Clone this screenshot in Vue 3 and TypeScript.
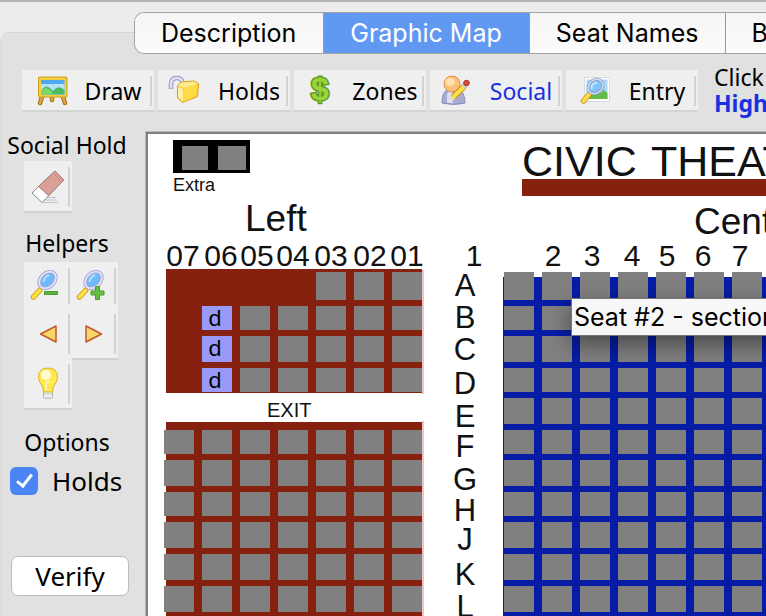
<script setup lang="ts">
import { ref } from 'vue'

interface Tool { id: string; label: string }
interface MapLabel { text: string; x: number; y: number; size: number; anchor?: 'start' | 'middle' }
interface Row { name: string; y: number; h: number; base: number }
interface Seat { x: number; y: number; w: number; h: number }

const tabs = ['Description', 'Graphic Map', 'Seat Names', 'B']
const activeTab = ref('Graphic Map')

const tools: Tool[] = [
  { id: 'draw', label: 'Draw' },
  { id: 'holds', label: 'Holds' },
  { id: 'zones', label: 'Zones' },
  { id: 'social', label: 'Social' },
  { id: 'entry', label: 'Entry' },
]
const activeTool = ref('social')
const showHolds = ref(true)

const rows: Row[] = [
  { name: 'A', y: 138, h: 28, base: 162 },
  { name: 'B', y: 172, h: 24, base: 194 },
  { name: 'C', y: 202, h: 26, base: 226 },
  { name: 'D', y: 234, h: 24, base: 260 },
  { name: 'E', y: 264, h: 26, base: 293 },
  { name: 'F', y: 296, h: 24, base: 323 },
  { name: 'G', y: 326, h: 26, base: 356 },
  { name: 'H', y: 358, h: 24, base: 387 },
  { name: 'J', y: 388, h: 26, base: 416 },
  { name: 'K', y: 420, h: 26, base: 451 },
  { name: 'L', y: 452, h: 26, base: 483 },
]

const seatWidth = 30
const seatPitch = 38
const leftStart = 16
const centerStart = 356

const leftSeats: Seat[] = []
const heldSeats: Seat[] = []
const centerSeats: Seat[] = []

for (const row of rows) {
  for (let col = 0; col < 8; col++) {
    centerSeats.push({ x: centerStart + col * seatPitch, y: row.y, w: seatWidth, h: row.h })
  }
  if (row.name === 'E') continue
  const first = row.name === 'A' ? 4 : 'BCD'.includes(row.name) ? 1 : 0
  for (let col = first; col < 7; col++) {
    const seat = { x: leftStart + col * seatPitch, y: row.y, w: seatWidth, h: row.h }
    if (first === 1 && col === 1) heldSeats.push(seat)
    else leftSeats.push(seat)
  }
}

const labels: MapLabel[] = [
  { text: 'Extra', x: 25, y: 57, size: 18 },
  { text: 'Left', x: 97, y: 97, size: 37 },
  { text: 'EXIT', x: 119, y: 283, size: 20 },
  { text: 'CIVIC', x: 374, y: 42, size: 43 },
  { text: 'THEATRE', x: 503, y: 42, size: 43 },
  { text: 'Center', x: 546, y: 100, size: 37 },
  ...['07', '06', '05', '04', '03', '02', '01'].map((text, i) => ({
    text, x: [35, 73, 109, 145, 183, 222, 259][i], y: 132, size: 30, anchor: 'middle' as const,
  })),
  ...['1', '2', '3', '4', '5', '6', '7'].map((text, i) => ({
    text, x: [326, 405, 444, 484, 519, 555, 592][i], y: 132, size: 30, anchor: 'middle' as const,
  })),
  ...rows.map((row) => ({ text: row.name, x: 317, y: row.base, size: 31, anchor: 'middle' as const })),
]
</script>

<template>
  <div class="window">
    <nav class="tabs">
      <button
        v-for="tab in tabs"
        :key="tab"
        type="button"
        class="tab"
        :class="{ active: tab === activeTab }"
        @click="activeTab = tab"
      >{{ tab }}</button>
    </nav>

    <main class="panel">
      <div class="toolbar">
        <button
          v-for="tool in tools"
          :key="tool.id"
          type="button"
          class="tool"
          :class="{ active: tool.id === activeTool }"
          @click="activeTool = tool.id"
        >
          <svg class="tool-icon" viewBox="0 0 36 32" aria-hidden="true">
            <g v-if="tool.id === 'draw'">
              <path d="M10 23 L8 29 M31 23 L33 29 M20 23 V26" stroke="#a8701c" stroke-width="4.500" stroke-linecap="round" />
              <path d="M10 23 L8 29 M31 23 L33 29 M20 23 V26" stroke="#e0a040" stroke-width="2.500" stroke-linecap="round" />
              <rect x="6.500" y="3" width="28.500" height="20" rx="1" fill="#f4cf3c" stroke="#c9a01e" />
              <rect x="9" y="6" width="23.500" height="14.500" fill="#4fa9ee" />
              <rect x="9" y="10" width="23.500" height="10.500" fill="#b8e2fb" />
              <path d="M9 17 Q14 9 19 15 L21 17 Q27 10 32.500 16 V20.500 H9Z" fill="#4dbb62" />
              <path d="M9 18 Q14 11 19 17 L21 20.500 H9Z" fill="#7fd66a" />
            </g>
            <g v-else-if="tool.id === 'holds'">
              <path d="M3 15 V10 Q3 4 9 4 Q14.500 4 14.500 10 V13" fill="none" stroke="#9396c4" stroke-width="4.500" />
              <path d="M3 14.500 V10 Q3 4 9 4 Q14.500 4 14.500 10 V13" fill="none" stroke="#dfe1f6" stroke-width="2.500" />
              <path d="M9.500 12 L13 8 L26 7 L30.500 9.500 L29.500 22.500 L14.500 28.500 L9.500 24Z" fill="#f8cf35" stroke="#d99b19" />
              <path d="M10 12 L13 8.500 L26 7.500 L30 10 L16 14Z" fill="#ffe98a" />
              <path d="M15.500 14.500 L29.500 10.500 L29 22 L15 28Z" fill="#fddb46" />
              <path d="M10 13 L15 15 V27.500 L10 23.500Z" fill="#fff0a0" />
            </g>
            <text
              v-else-if="tool.id === 'zones'"
              class="dollar"
              x="16"
              y="26"
              text-anchor="middle"
            >$</text>
            <g v-else-if="tool.id === 'social'">
              <path d="M2 29 Q2 17 8 16 H18 Q25 17 25 29 Q14 32 2 29Z" fill="#a9abd3" stroke="#8a8cba" />
              <path d="M7 20 Q8 17 12 17 L13 29 H7Z" fill="#dcddf2" />
              <circle cx="12" cy="10" r="8" fill="#fcbf74" stroke="#dd9147" />
              <ellipse cx="10" cy="8" rx="5" ry="4" fill="#ffe0b0" />
              <path d="M13 23.500 L25.500 11" stroke="#b88a18" stroke-width="6" />
              <path d="M13 23.500 L25.500 11" stroke="#ffe14b" stroke-width="4" />
              <path d="M10.500 26.500 L11.500 21.500 L15.500 25.500Z" fill="#f4d9a0" />
              <path d="M23.500 13 L25 11.500" stroke="#c8cbe0" stroke-width="5.500" />
              <circle cx="26.500" cy="9" r="2.800" fill="#d8483c" stroke="#a8362c" />
            </g>
            <g v-else>
              <rect x="8.500" y="3.500" width="25" height="24" fill="#fff" stroke="#d6dbe0" />
              <rect x="10.500" y="5.500" width="21" height="19.500" fill="#a7d8f8" />
              <path d="M10.500 20 Q19 12 25 19 L28 16 L31.500 19 V25 H10.500Z" fill="#62bd45" />
              <path d="M7.500 27 L13 20.500" stroke="#c79316" stroke-width="5.500" stroke-linecap="round" />
              <path d="M7.500 27 L13 20.500" stroke="#ffdc45" stroke-width="4" stroke-linecap="round" />
              <ellipse cx="19.500" cy="12.500" rx="8" ry="6.500" transform="rotate(-40 19.500 12.500)" fill="#7fc4f8" stroke="#8f98c6" stroke-width="3" />
              <ellipse cx="19.500" cy="12.500" rx="8" ry="6.500" transform="rotate(-40 19.500 12.500)" fill="none" stroke="#d5dcf4" stroke-width="1.500" />
              <path d="M15.500 15 Q15 9 21 9" fill="none" stroke="#c4e6fd" stroke-width="2" />
            </g>
          </svg>
          <span class="tool-label">{{ tool.label }}</span>
        </button>
        <p class="hint">Click<br><strong>High</strong></p>
      </div>

      <div class="workspace">
        <aside class="sidebar">
          <h2 class="heading">Social Hold</h2>
          <div class="icon-grid">
            <button type="button" class="icon-button last" aria-label="Erase">
              <svg viewBox="0 0 48 50" aria-hidden="true">
                <path d="M23 36.500 H32 M21 39 H33 M19 41.500 H34" stroke="#c2c2c6" />
                <path d="M31 10 L40 19 L18 41.500 L8 32Z" fill="#fff" stroke="#87878b" stroke-linejoin="round" />
                <path d="M31 10 L40 19 L24.500 34.500 L14.500 25.500Z" fill="#dc9f98" stroke="#a07c78" />
                <path d="M30 13 L37 20" stroke="#c6837c" />
              </svg>
            </button>
          </div>

          <h2 class="heading helpers">Helpers</h2>
          <div class="icon-grid">
            <button type="button" class="icon-button short" aria-label="Zoom out">
              <svg viewBox="0 0 48 46" aria-hidden="true">
                <path d="M9.500 35 L15.500 28.500" stroke="#c9981a" stroke-width="5.500" stroke-linecap="round" />
                <path d="M9.500 35 L15.500 28.500" stroke="#ffdf3f" stroke-width="4" stroke-linecap="round" />
                <ellipse cx="23.500" cy="18" rx="9.500" ry="7" transform="rotate(-45 23.500 18)" fill="#6ebafa" stroke="#9a9dca" stroke-width="3.500" />
                <ellipse cx="23.500" cy="18" rx="9.500" ry="7" transform="rotate(-45 23.500 18)" fill="none" stroke="#dfe0f5" stroke-width="2" />
                <path d="M19.500 20 Q20 15 25 13" fill="none" stroke="#a8d8fd" stroke-width="2.500" />
                <rect x="20.500" y="29.500" width="13" height="3" fill="#5cb338" stroke="#4c9c32" />
              </svg>
            </button>
            <button type="button" class="icon-button short" aria-label="Zoom in">
              <svg viewBox="2 0 48 46" aria-hidden="true">
                <path d="M9.500 35 L15.500 28.500" stroke="#c9981a" stroke-width="5.500" stroke-linecap="round" />
                <path d="M9.500 35 L15.500 28.500" stroke="#ffdf3f" stroke-width="4" stroke-linecap="round" />
                <ellipse cx="23.500" cy="18" rx="9.500" ry="7" transform="rotate(-45 23.500 18)" fill="#6ebafa" stroke="#9a9dca" stroke-width="3.500" />
                <ellipse cx="23.500" cy="18" rx="9.500" ry="7" transform="rotate(-45 23.500 18)" fill="none" stroke="#dfe0f5" stroke-width="2" />
                <path d="M19.500 20 Q20 15 25 13" fill="none" stroke="#a8d8fd" stroke-width="2.500" />
                <path d="M25.500 24.500 H29.500 V29 H34 V33 H29.500 V37.500 H25.500 V33 H21 V29 H25.500Z" fill="#66bf42" stroke="#4c9c32" />
              </svg>
            </button>
            <button type="button" class="icon-button" aria-label="Previous">
              <svg viewBox="0 0 48 50" aria-hidden="true">
                <path d="M16.500 26 L32 18 V34Z" fill="#f7d768" stroke="#c4562f" stroke-width="1.500" stroke-linejoin="round" />
              </svg>
            </button>
            <button type="button" class="icon-button last" aria-label="Next">
              <svg viewBox="0 0 48 50" aria-hidden="true">
                <path d="M29.500 26 L14 18 V34Z" fill="#f7d768" stroke="#c4562f" stroke-width="1.500" stroke-linejoin="round" />
              </svg>
            </button>
            <button type="button" class="icon-button last" aria-label="Hint">
              <svg viewBox="0 0 48 50" aria-hidden="true">
                <rect x="19.500" y="33" width="9" height="7" rx="1.500" fill="#f2f2f2" stroke="#b4b4b8" />
                <path d="M20 36 H28" stroke="#c8c8cc" />
                <path d="M19.500 34 Q19.500 29 17 26 Q14.500 23 14.500 19.500 Q14.500 10 24 10 Q33.500 10 33.500 19.500 Q33.500 23 31 26 Q28.500 29 28.500 34Z" fill="#ffe950" stroke="#dcae2c" />
                <ellipse cx="22" cy="17" rx="5" ry="5" fill="#fffbd0" />
                <path d="M22 32 V25 L26 23" fill="none" stroke="#fff6a8" stroke-width="2" />
              </svg>
            </button>
          </div>

          <h2 class="heading options">Options</h2>
          <label class="check" for="holds">
            <input id="holds" v-model="showHolds" type="checkbox">
            <span>Holds</span>
          </label>
          <button type="button" class="verify">Verify</button>
        </aside>

        <section class="viewport" aria-label="Seating map">
          <div class="canvas">
            <svg class="map" width="760" height="520" role="img" aria-label="Civic Theatre seating map">
              <rect x="25" y="6" width="77" height="33" fill="#000" />
              <rect x="34" y="12" width="26" height="24" class="seat" />
              <rect x="70" y="12" width="28" height="24" class="seat" />
              <rect x="374" y="45" width="386" height="17" class="red" />
              <rect x="274" y="136" width="2" height="124" class="fringe" />
              <rect x="274" y="287" width="2" height="240" class="fringe" />
              <rect x="18" y="135" width="256" height="124" class="red" />
              <rect x="18" y="288" width="256" height="240" class="red" />
              <rect x="355" y="143" width="400" height="376" class="blue" />
              <rect
                v-for="(seat, i) in [...leftSeats, ...centerSeats]"
                :key="i"
                :x="seat.x"
                :y="seat.y"
                :width="seat.w"
                :height="seat.h"
                class="seat"
              />
              <g v-for="seat in heldSeats" :key="seat.y">
                <rect :x="seat.x" :y="seat.y" :width="seat.w" :height="seat.h" :class="showHolds ? 'held' : 'seat'" />
                <text v-if="showHolds" class="held-mark" text-anchor="middle" :x="seat.x + 13" :y="seat.y + 20">d</text>
              </g>
              <text
                v-for="(label, i) in labels"
                :key="'label' + i"
                :x="label.x"
                :y="label.y"
                :font-size="label.size"
                :text-anchor="label.anchor ?? 'start'"
                class="map-label"
              >{{ label.text }}</text>
            </svg>
            <div class="tooltip" role="tooltip">Seat #2 - section</div>
          </div>
        </section>
      </div>
    </main>
  </div>
</template>

<style>
body {
  background: #ececec;
  overflow: hidden;
}
</style>

<style scoped>
.window {
  height: 100vh;
  display: flex;
  flex-direction: column;
  overflow: hidden;
  box-sizing: border-box;
  border-top: 2px solid #b4b4b4;
  background: #ececec;
  color: #000;
  font-family: "Noto Sans", "Open Sans", sans-serif;
  font-size: 23px;
}

button {
  margin: 0;
  padding: 0;
  border: 0;
  color: inherit;
  font: inherit;
}

.tabs {
  position: relative;
  z-index: 1;
  display: flex;
  flex: none;
  margin: 10px 0 0 134px;
  height: 42px;
  box-sizing: border-box;
  overflow: hidden;
  border: 1px solid #a3a3a3;
  border-right: 0;
  border-radius: 10px 0 0 10px;
  font-family: Inter, Roboto, sans-serif;
  font-size: 25px;
}

.tab {
  flex: none;
  padding: 0 27px 0 26px;
  border-right: 1px solid #999;
  background: linear-gradient(#f5f5f5, #fbfbfb);
  white-space: nowrap;
}

.tab:last-child {
  flex: 1 0 auto;
  padding: 0;
  padding-left: 25px;
  border-right: 0;
  text-align: left;
}

.tab.active {
  background: #6199f2;
  color: #fff;
}

.panel {
  flex: 1;
  min-height: 0;
  display: flex;
  flex-direction: column;
  margin-top: -22px;
  padding-top: 37px;
  border-top: 1px solid #d3d3d3;
  border-left: 1px solid #dadada;
  border-top-left-radius: 10px;
  background: #e1e1e1;
}

.toolbar {
  display: flex;
  flex: none;
  gap: 4px;
  height: 61px;
  padding-left: 21px;
}

.tool {
  position: relative;
  display: flex;
  flex: none;
  align-items: center;
  gap: 8px;
  width: 132px;
  height: 42px;
  padding: 0 4px 0 10px;
  border-bottom: 2px solid #d4d4d4;
  background: #efefef;
}

.tool.active {
  color: #1a2fe0;
}

.tool::after,
.icon-button::after {
  content: "";
  position: absolute;
  top: 6px;
  right: 2px;
  bottom: 4px;
  width: 2px;
  background: #d2d2d2;
}

.tool-icon {
  flex: none;
  width: 36px;
  height: 32px;
  fill: none;
}

.dollar {
  font: bold 32px "Liberation Sans", sans-serif;
  fill: #9bd33c;
  stroke: #5f9c22;
  stroke-width: 3px;
  paint-order: stroke;
}

.tool-label {
  flex: 1;
  padding-top: 2px;
  text-align: center;
  white-space: nowrap;
}

.hint {
  margin: -6px 0 0 12px;
  line-height: 26px;
  white-space: nowrap;
}

.hint strong {
  color: #1a2fe0;
}

.workspace {
  flex: 1;
  min-height: 0;
  display: grid;
  grid-template-columns: 144px minmax(0, 1fr);
}

.sidebar {
  margin-top: -2px;
  padding-right: 12px;
}

.heading {
  margin: 0;
  font-size: 23px;
  font-weight: 400;
  line-height: 32px;
  text-align: center;
  white-space: nowrap;
}

.helpers {
  margin: 16px 0 3px;
}

.options {
  margin: 18px 0 8px;
}

.icon-grid {
  display: grid;
  grid-template-columns: 48px 46px;
  align-items: start;
  padding-left: 23px;
}

.icon-button {
  position: relative;
  height: 50px;
  overflow: hidden;
  background: #efefef;
}

.icon-button.short {
  height: 46px;
}

.icon-button.last {
  height: 52px;
  margin-bottom: -2px;
  border-bottom: 2px solid #d2d2d2;
}

.icon-button svg {
  display: block;
  width: 48px;
  fill: none;
}

.check {
  display: flex;
  align-items: center;
  gap: 14px;
  height: 30px;
  padding-left: 9px;
  font-size: 26px;
}

.check input {
  appearance: none;
  flex: none;
  display: grid;
  place-items: center;
  width: 28px;
  height: 28px;
  margin: 0;
  border-radius: 6px;
  background: #fff;
}

.check input:checked {
  background: #4a84f5;
}

.check input:checked::after {
  content: "";
  width: 6px;
  height: 13px;
  margin-top: -4px;
  border: solid #fff;
  border-width: 0 3px 3px 0;
  transform: rotate(38deg);
}

.verify {
  display: block;
  width: 118px;
  height: 40px;
  margin: 60px 0 0 10px;
  border: 1px solid #bcbcbc;
  border-radius: 7px;
  background: #fff;
  font-size: 26px;
  line-height: 34px;
}

.viewport {
  display: flex;
  min-height: 0;
  border: solid #b9b9b9;
  border-width: 1px 0 0 1px;
}

.canvas {
  position: relative;
  flex: 1;
  min-width: 0;
  overflow: hidden;
  border: solid #808080;
  border-width: 2px 0 0 2px;
  background: #fff;
}

.map {
  display: block;
}

.map-label {
  font-family: "Liberation Sans", Arial, sans-serif;
  fill: #111;
}

.seat {
  fill: #808080;
}

.held {
  fill: #9999fa;
}

.held-mark {
  font-size: 22px;
  fill: #000;
}

.red {
  fill: #86200f;
}

.blue {
  fill: #061ca6;
}

.fringe {
  fill: #f0c4c6;
}

.tooltip {
  position: absolute;
  left: 423px;
  top: 164px;
  padding: 0 2px;
  border: 1px solid #777;
  background: #f7f7f7;
  box-shadow: 0 8px 22px rgba(0, 0, 0, 0.45);
  font-family: Inter, Roboto, sans-serif;
  font-size: 25px;
  line-height: 36px;
  white-space: nowrap;
}
</style>
